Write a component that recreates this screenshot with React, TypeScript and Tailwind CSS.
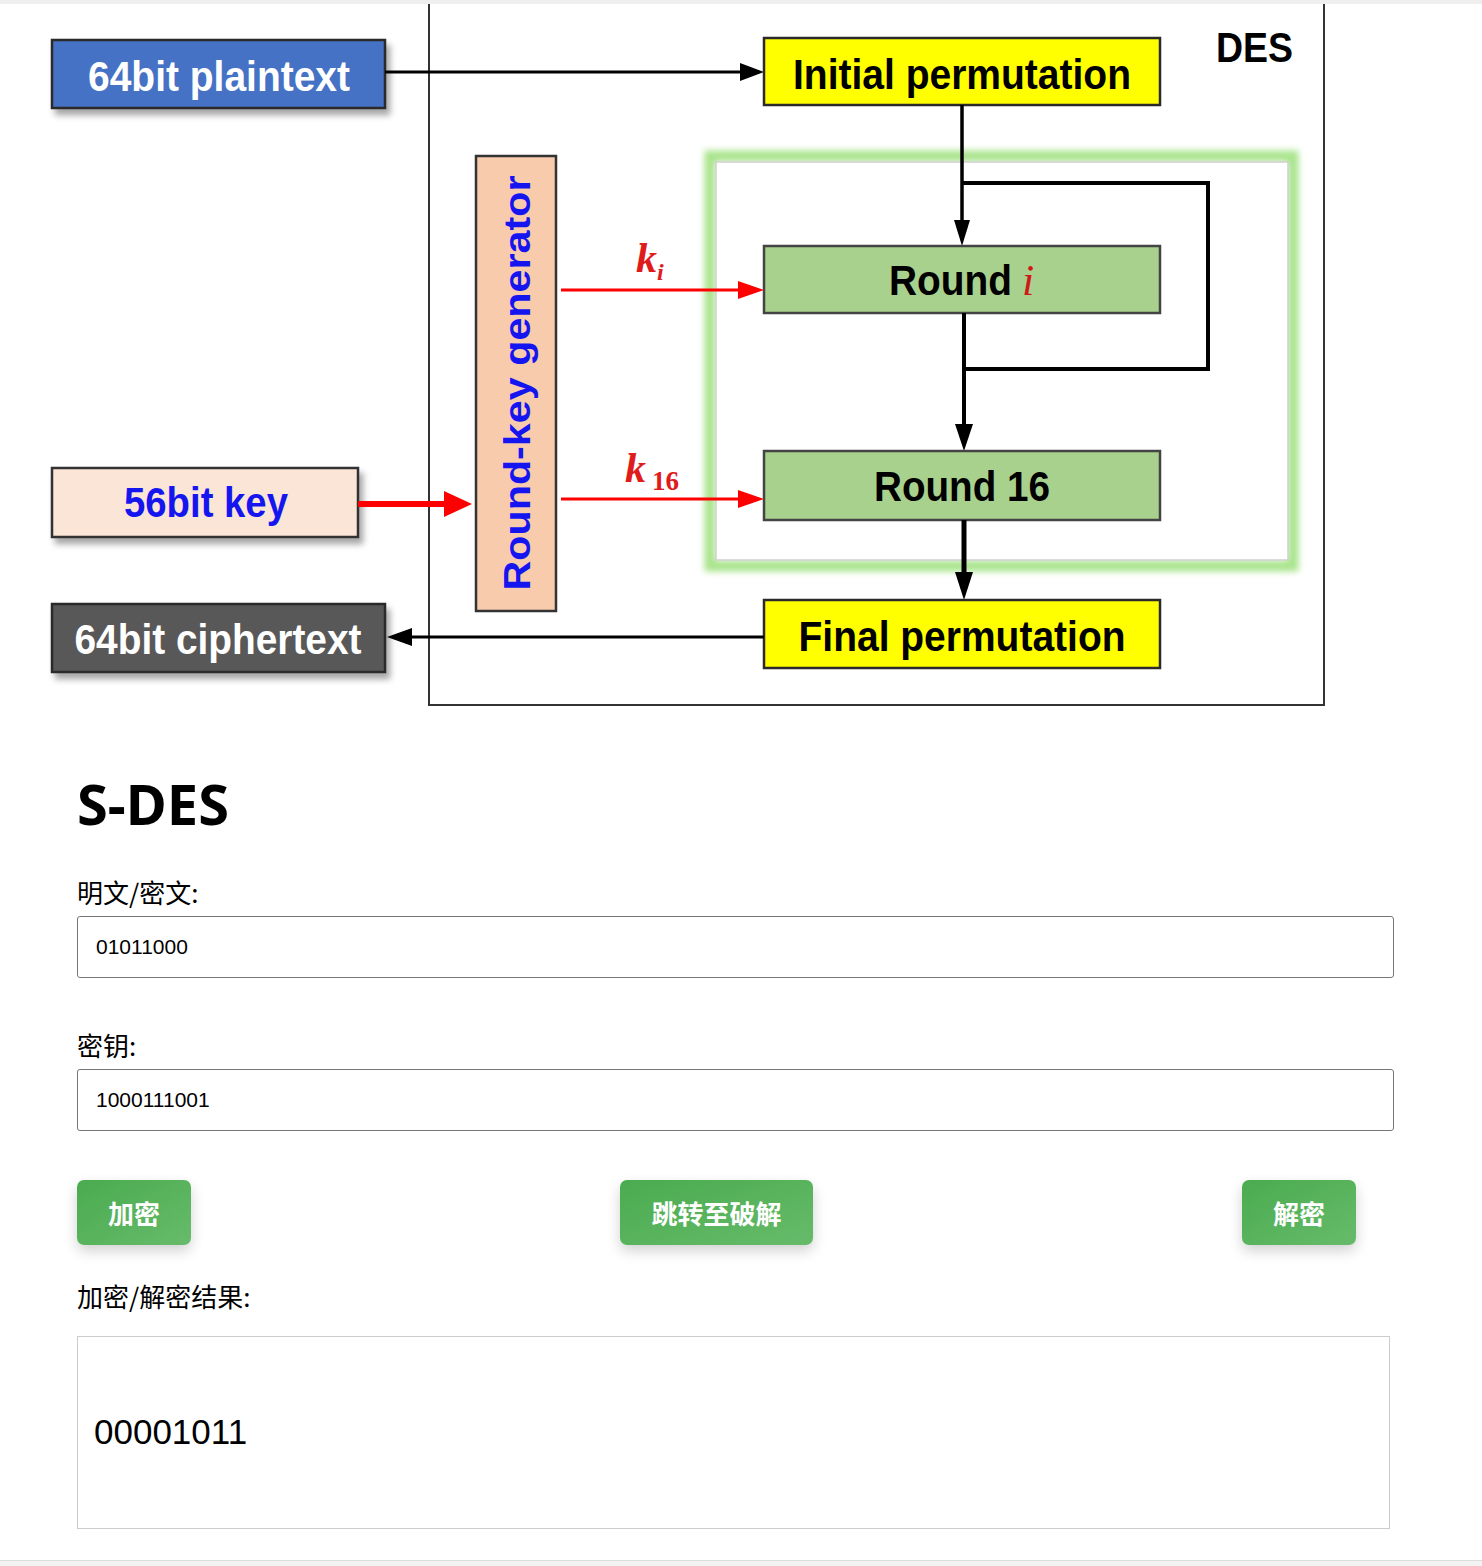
import React from "react";

const narrow = "'Liberation Sans', Arial, sans-serif";
const serif = "'Liberation Serif', 'Times New Roman', serif";

function Box({ x, y, w, h, fill, stroke = "#2a2a2a", shadow = false }: { x: number; y: number; w: number; h: number; fill: string; stroke?: string; shadow?: boolean }) {
  return <rect x={x} y={y} width={w} height={h} fill={fill} stroke={stroke} strokeWidth={2.5} filter={shadow ? "url(#drop)" : undefined} />;
}

function Label({ x, y, len, children, fill = "#000", size = 43, anchor = "middle" }: { x: number; y: number; len: number; children: React.ReactNode; fill?: string; size?: number; anchor?: "middle" | "start" }) {
  return (
    <text x={x} y={y} textAnchor={anchor} fontFamily={narrow} fontWeight="bold" fontSize={size} fill={fill} textLength={len} lengthAdjust="spacingAndGlyphs">
      {children}
    </text>
  );
}

function DesDiagram() {
  return (
    <svg width="1482" height="712" viewBox="0 4 1482 712" className="block">
      <defs>
        <filter id="drop" x="-10%" y="-20%" width="130%" height="160%">
          <feDropShadow dx="4" dy="6" stdDeviation="3" floodColor="#000" floodOpacity="0.35" />
        </filter>
        <filter id="glow" x="-5%" y="-5%" width="110%" height="110%">
          <feGaussianBlur stdDeviation="3" />
        </filter>
      </defs>

      {/* DES frame */}
      <rect x="429" y="-20" width="895" height="725" fill="#fff" stroke="#333" strokeWidth="2" />
      <Label x={1216} y={62} len={77} size={42} anchor="start">DES</Label>

      {/* round loop area */}
      <rect x="710" y="156" width="583" height="410" fill="none" stroke="#a9e48c" strokeWidth="11" filter="url(#glow)" />
      <rect x="716" y="162" width="572" height="398" fill="#fff" stroke="#cfcfcf" strokeWidth="1.5" />

      {/* plaintext */}
      <Box x={52} y={40} w={333} h={68} fill="#4472c4" shadow />
      <Label x={219} y={91} len={262} fill="#fff">64bit plaintext</Label>
      <line x1="385" y1="72" x2="748" y2="72" stroke="#000" strokeWidth="3" />
      <polygon points="764,72 740,63 740,81" fill="#000" />

      {/* initial permutation */}
      <Box x={764} y={38} w={396} h={67} fill="#ffff00" />
      <Label x={962} y={89} len={338}>Initial permutation</Label>

      <line x1="962" y1="105" x2="962" y2="228" stroke="#000" strokeWidth="3.5" />
      <polygon points="962,246 954,220 970,220" fill="#000" />
      <polyline points="962,183 1208,183 1208,369 964,369" fill="none" stroke="#000" strokeWidth="4" />

      {/* round i */}
      <Box x={764} y={246} w={396} h={67} fill="#a9d18e" stroke="#444" />
      <Label x={889} y={295} len={123} anchor="start">Round</Label>
      <text x="1022" y="295" fontFamily={serif} fontStyle="italic" fontSize="44" fill="#d01818">i</text>

      <line x1="964" y1="313" x2="964" y2="430" stroke="#000" strokeWidth="4" />
      <polygon points="964,451 955,424 973,424" fill="#000" />

      {/* round 16 */}
      <Box x={764} y={451} w={396} h={69} fill="#a9d18e" stroke="#444" />
      <Label x={962} y={501} len={176}>Round 16</Label>

      <line x1="964" y1="520" x2="964" y2="580" stroke="#000" strokeWidth="5" />
      <polygon points="964,600 955,572 973,572" fill="#000" />

      {/* final permutation */}
      <Box x={764} y={600} w={396} h={68} fill="#ffff00" />
      <Label x={962} y={651} len={327}>Final permutation</Label>
      <line x1="764" y1="637" x2="404" y2="637" stroke="#000" strokeWidth="3" />
      <polygon points="387,637 412,628 412,646" fill="#000" />

      {/* ciphertext */}
      <Box x={52} y={604} w={333} h={68} fill="#595959" shadow />
      <Label x={218} y={654} len={287} fill="#fff">64bit ciphertext</Label>

      {/* key */}
      <Box x={52} y={468} w={306} h={69} fill="#fbe5d6" stroke="#333" shadow />
      <Label x={206} y={517} len={164} fill="#1515f0">56bit key</Label>
      <line x1="358" y1="504" x2="448" y2="504" stroke="#ff0000" strokeWidth="6" />
      <polygon points="472,504 444,491 444,517" fill="#ff0000" />

      {/* round-key generator */}
      <Box x={476} y={156} w={80} h={455} fill="#f8cbad" stroke="#333" />
      <text
        x="517"
        y="396"
        transform="rotate(-90 517 383)"
        textAnchor="middle"
        fontFamily={narrow}
        fontWeight="bold"
        fontSize="36"
        fill="#1515f0"
        textLength={415}
        lengthAdjust="spacingAndGlyphs"
      >
        Round-key generator
      </text>

      {/* k_i */}
      <line x1="561" y1="290" x2="744" y2="290" stroke="#ff0000" strokeWidth="3" />
      <polygon points="764,290 738,281 738,299" fill="#ff0000" />
      <text x="636" y="272" fontFamily={serif} fontStyle="italic" fontWeight="bold" fontSize="42" fill="#e01b1b">k</text>
      <text x="657" y="280" fontFamily={serif} fontStyle="italic" fontWeight="bold" fontSize="24" fill="#e01b1b">i</text>

      {/* k_16 */}
      <line x1="561" y1="499" x2="744" y2="499" stroke="#ff0000" strokeWidth="3" />
      <polygon points="764,499 738,490 738,508" fill="#ff0000" />
      <text x="625" y="482" fontFamily={serif} fontStyle="italic" fontWeight="bold" fontSize="42" fill="#e01b1b">k</text>
      <text x="652" y="490" fontFamily={serif} fontWeight="bold" fontSize="27" fill="#e01b1b">16</text>
    </svg>
  );
}

const cjk = "font-['Microsoft_YaHei','Noto_Sans_CJK_SC',sans-serif]";

export default function App() {
  return (
    <div className="min-h-screen bg-white text-black">
      <div className="h-[4px] bg-[#efefef]" />
      <DesDiagram />

      <div className="pl-[77px] pt-[54px]">
        <h1 className="font-['Noto_Sans','Noto_Sans_CJK_SC',sans-serif] text-[56px] font-bold leading-[67px]">S-DES</h1>

        <label className={`${cjk} mt-[37px] block h-[36px] text-[26px] leading-[36px]`}>明文/密文:</label>
        <input
          defaultValue="01011000"
          className="mt-[6px] block h-[62px] w-[1317px] rounded-[3px] border border-[#767676] px-[18px] font-['Liberation_Sans',Arial,sans-serif] text-[21px] outline-none"
        />

        <label className={`${cjk} mt-[49px] block h-[36px] text-[26px] leading-[36px]`}>密钥:</label>
        <input
          defaultValue="1000111001"
          className="mt-[6px] block h-[62px] w-[1317px] rounded-[3px] border border-[#767676] px-[18px] font-['Liberation_Sans',Arial,sans-serif] text-[21px] outline-none"
        />

        <div className="mt-[49px] flex w-[1279px] justify-between">
          {["加密", "跳转至破解", "解密"].map((t) => (
            <button
              key={t}
              className={`${cjk} h-[65px] rounded-[7px] bg-linear-to-br from-[#4aab4f] to-[#66bb6a] px-[31px] text-[26px] font-bold text-white shadow-[0_6px_14px_rgba(0,0,0,0.18)]`}
            >
              {t}
            </button>
          ))}
        </div>

        <label className={`${cjk} mt-[33px] block h-[36px] text-[26px] leading-[36px]`}>加密/解密结果:</label>
        <div className="mt-[22px] flex h-[193px] w-[1313px] items-center border border-[#cccccc] px-[16px] font-['Liberation_Sans',Arial,sans-serif] text-[35px]">
          00001011
        </div>
      </div>

      <div className="mt-[31px] h-[6px] border-t border-[#dcdcdc] bg-[#f3f3f3]" />
    </div>
  );
}
